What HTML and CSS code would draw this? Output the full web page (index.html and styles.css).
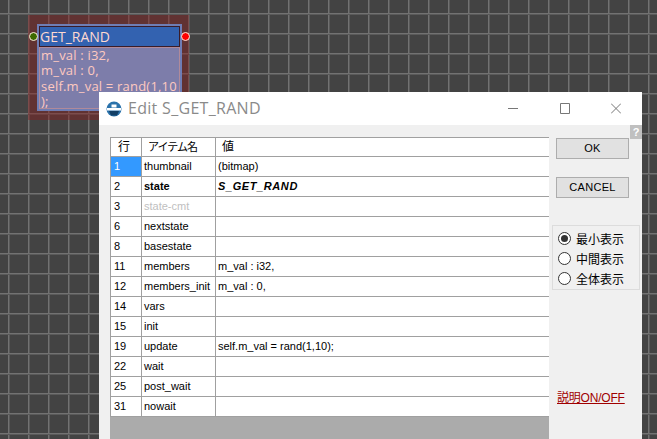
FILE: index.html

```html
<!DOCTYPE html>
<html lang="ja">
<head>
    <meta charset="UTF-8">
    <title>Edit S_GET_RAND</title>
    <link rel="stylesheet" href="styles.css">
</head>
<body>
    <div class="canvas">
        <div class="node">
            <div class="node-body">
                <div class="node-title">GET_RAND</div>
                <div class="node-text">m_val : i32,<br>m_val : 0,<br>self.m_val = rand(1,10<br>);</div>
            </div>
            <span class="pin pin-in"></span>
            <span class="pin pin-out"></span>
        </div>

        <div class="window">
            <div class="titlebar">
                <svg class="app-icon" width="16" height="16" viewBox="0 0 16 16">
                    <circle cx="8" cy="8" r="7.5" fill="#2a72ab"/>
                    <path d="M5.5 3.5h5v3h-5z" fill="#fff"/>
                    <path d="M1 7h14v2.5H1z" fill="#fff"/>
                    <path d="M3 10h10l-2 4.5H5z" fill="#123f66"/>
                </svg>
                <span class="title-text">Edit S_GET_RAND</span>
                <div class="win-buttons">
                    <svg width="10" height="11" viewBox="0 0 10 11"><path d="M0 5.5h10" stroke="#777" fill="none"/></svg>
                    <svg width="10" height="11" viewBox="0 0 10 11"><path d="M.5.5h9v10h-9z" stroke="#777" fill="none"/></svg>
                    <svg width="10" height="11" viewBox="0 0 10 11"><path d="M0 .5l10 10M10 .5L0 10.5" stroke="#777" fill="none"/></svg>
                </div>
            </div>
            <div class="content">
                <div class="table-area">
                    <table class="props">
                        <tr class="head"><td>行</td><td><span class="head-kana">アイテム名</span></td><td class="head-val">値</td></tr>
                        <tr><td class="selected">1</td><td>thumbnail</td><td>(bitmap)</td></tr>
                        <tr class="bold"><td class="plain">2</td><td>state</td><td><em>S_GET_RAND</em></td></tr>
                        <tr><td>3</td><td class="muted">state-cmt</td><td></td></tr>
                        <tr><td>6</td><td>nextstate</td><td></td></tr>
                        <tr><td>8</td><td>basestate</td><td></td></tr>
                        <tr><td>11</td><td>members</td><td>m_val : i32,</td></tr>
                        <tr><td>12</td><td>members_init</td><td>m_val : 0,</td></tr>
                        <tr><td>14</td><td>vars</td><td></td></tr>
                        <tr><td>15</td><td>init</td><td></td></tr>
                        <tr><td>19</td><td>update</td><td>self.m_val = rand(1,10);</td></tr>
                        <tr><td>22</td><td>wait</td><td></td></tr>
                        <tr><td>25</td><td>post_wait</td><td></td></tr>
                        <tr><td>31</td><td>nowait</td><td></td></tr>
                    </table>
                    <div class="table-empty"></div>
                </div>
                <div class="side">
                    <span class="help">?</span>
                    <button class="btn">OK</button>
                    <button class="btn">CANCEL</button>
                    <div class="group">
                        <label class="radio"><span class="dot on"></span>最小表示</label>
                        <label class="radio"><span class="dot"></span>中間表示</label>
                        <label class="radio"><span class="dot"></span>全体表示</label>
                    </div>
                    <a class="desc-link">説明ON/OFF</a>
                </div>
            </div>
        </div>
    </div>
</body>
</html>
```

FILE: styles.css

```css
html, body { margin: 0; padding: 0; height: 100%; overflow: hidden; }
body { font-family: "Liberation Sans", "Noto Sans CJK JP", sans-serif; }

.canvas {
    position: relative;
    width: 657px;
    height: 439px;
    overflow: hidden;
    background-color: #434343;
    background-image:
        linear-gradient(#727272 1px, #5a5a5a 1px, #5a5a5a 2px, transparent 2px),
        linear-gradient(90deg, #727272 1px, #5a5a5a 1px, #5a5a5a 2px, transparent 2px);
    background-size: 20px 20px;
    background-position: 8px 13px;
}

/* node */
.node {
    position: absolute;
    left: 28px;
    top: 15px;
    width: 161px;
    height: 105px;
    box-sizing: border-box;
    padding: 9px 7px 9px 9px;
    background: rgba(135, 30, 30, 0.45);
}
.node-body {
    height: 87px;
    box-sizing: border-box;
    border: 2px solid #6f7db4;
    background: #7d7daa;
    overflow: hidden;
}
.node-title {
    height: 21px;
    box-sizing: border-box;
    background: #3362b0;
    border: 1px solid #3a1c28;
    color: #ffd9d0;
    font: 14px/19px "Open Sans", sans-serif;
}
.node-text {
    height: 62px;
    box-sizing: border-box;
    border: 1px solid #b08a9a;
    color: #ffc9c0;
    font: 13px/15.3px "Open Sans", sans-serif;
    letter-spacing: 0.2px;
    padding-left: 1px;
    white-space: nowrap;
    overflow: hidden;
}
.pin {
    position: absolute;
    top: 17px;
    width: 9px;
    height: 9px;
    box-sizing: border-box;
    border: 1px solid #ffeedd;
    border-radius: 50%;
}
.pin-in { left: 1px; background: #3d6b00; }
.pin-out { right: -1px; background: #f00; }

/* window */
.window {
    position: absolute;
    left: 99px;
    top: 92px;
    width: 543px;
    height: 347px;
    background: #f0f0f0;
}
.titlebar {
    height: 33px;
    background: #fff;
    display: flex;
    align-items: center;
    padding-left: 7px;
}
.app-icon { margin-right: 6px; }
.title-text {
    font: 16px "Open Sans", sans-serif;
    letter-spacing: 0.3px;
    color: #8a8a8a;
    margin-top: -2px;
}
.win-buttons {
    margin-left: auto;
    display: flex;
    gap: 41.5px;
    padding-right: 21px;
}
.content { display: flex; height: 314px; }
.table-area {
    margin: 12px 0 0 11px;
    width: 439px;
    display: flex;
    flex-direction: column;
}
.props {
    border-collapse: collapse;
    width: 439px;
    table-layout: fixed;
    background: #fff;
    font-size: 11px;
    line-height: 14px;
    color: #000;
}
.props td {
    height: 20px;
    padding: 0 2px 1px;
    border: 1px solid #a0a0a0;
    border-right: 0;
    white-space: nowrap;
    box-sizing: border-box;
}
.props td:first-child { width: 31px; padding-left: 3px; }
.props td:nth-child(2) { width: 74px; }
.props .head td { height: 19px; font-size: 12px; }
.props .head td:first-child { padding-left: 7px; }
.head-kana { font-size: 11px; letter-spacing: -1px; margin-left: 4px; }
.props .head-val { padding-left: 6px; }
.props .selected { background: #3399ff; color: #fff; padding-left: 4px; }
.bold td { font-weight: bold; }
.bold em { letter-spacing: 0.6px; }
.bold .plain { font-weight: normal; }
.muted { color: #c0c0c0; }
.table-empty { flex: 1; background: #ababab; }

.side {
    position: relative;
    flex: 1;
    display: flex;
    flex-direction: column;
}
.help {
    position: absolute;
    right: 0;
    top: 0;
    width: 12px;
    height: 14px;
    background: #c0c0c0;
    color: #fff;
    font: bold 11px/14px "Liberation Sans", sans-serif;
    text-align: center;
}
.btn {
    width: 73px;
    height: 21px;
    margin: 13px 0 0 7px;
    padding: 0 0 2px;
    background: #e1e1e1;
    border: 1px solid #adadad;
    font-size: 11px;
    letter-spacing: 0.3px;
    color: #000;
}
.btn + .btn { margin-top: 18px; }
.group {
    margin: 27px 2px 0 3px;
    height: 65px;
    box-sizing: border-box;
    border: 1px solid #dcdcdc;
    padding: 2px 0 0 5px;
}
.radio {
    display: flex;
    align-items: center;
    height: 20px;
    font-size: 12px;
}
.dot {
    width: 13px;
    height: 13px;
    box-sizing: border-box;
    border: 1px solid #333;
    border-radius: 50%;
    background: #fff;
    margin-right: 5px;
    position: relative;
}
.dot.on::after {
    content: "";
    position: absolute;
    left: 2px;
    top: 2px;
    width: 7px;
    height: 7px;
    border-radius: 50%;
    background: #333;
}
.desc-link {
    margin: 98px 0 0 8px;
    font-size: 12px;
    letter-spacing: -0.2px;
    color: #a00000;
    text-decoration: underline;
}
```
